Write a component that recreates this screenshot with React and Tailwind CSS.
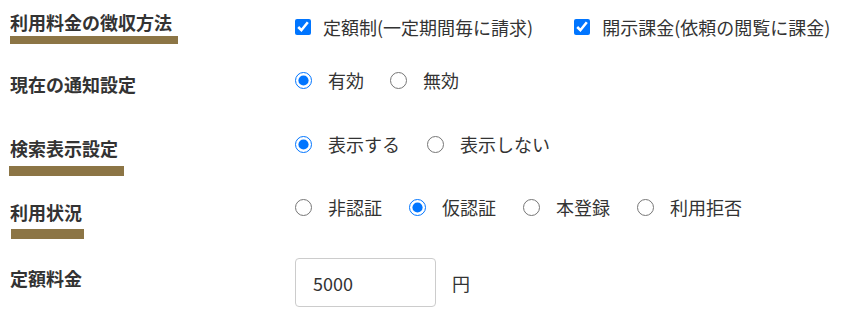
import React, { useState } from 'react'

const font = { fontFamily: '"Noto Sans CJK JP", "Noto Sans", sans-serif' }

const Radio = ({ name, label, checked, onChange }) => (
  <label className="flex items-center cursor-pointer">
    <input type="radio" name={name} checked={checked} onChange={onChange} className="w-[17px] h-[17px] m-0" />
    <span className="ml-[16px]">{label}</span>
  </label>
)

const Check = ({ label, checked, onChange }) => (
  <label className="flex items-center cursor-pointer">
    <input type="checkbox" checked={checked} onChange={onChange} className="w-[16px] h-[16px] m-0" />
    <span className="ml-[12px]">{label}</span>
  </label>
)

const Bar = ({ className }) => <div className={`bg-[#8c7545] ${className}`} />

export default function App() {
  const [fixed, setFixed] = useState(true)
  const [disclose, setDisclose] = useState(true)
  const [notify, setNotify] = useState('on')
  const [search, setSearch] = useState('show')
  const [status, setStatus] = useState('temp')
  const [fee, setFee] = useState('5000')

  return (
    <div className="w-[849px] h-[317px] bg-white text-[#333] text-[18px] leading-[26px]" style={font}>
      {/* 利用料金の徴収方法 */}
      <div className="flex h-[50px]">
        <div className="w-[295px] pt-[9px]">
          <div className="pl-[10px] font-bold">利用料金の徴収方法</div>
          <Bar className="ml-[10px] mt-[1px] w-[168px] h-[8px]" />
        </div>
        <div className="pt-[14px] flex items-start gap-[41px]">
          <Check label="定額制(一定期間毎に請求)" checked={fixed} onChange={() => setFixed(!fixed)} />
          <Check label="開示課金(依頼の閲覧に課金)" checked={disclose} onChange={() => setDisclose(!disclose)} />
        </div>
      </div>

      {/* 現在の通知設定 */}
      <div className="flex h-[65px]">
        <div className="w-[295px] pt-[21px] pl-[10px] font-bold">現在の通知設定</div>
        <div className="pt-[17px] flex items-start gap-[26px]">
          <Radio name="notify" label="有効" checked={notify === 'on'} onChange={() => setNotify('on')} />
          <Radio name="notify" label="無効" checked={notify === 'off'} onChange={() => setNotify('off')} />
        </div>
      </div>

      {/* 検索表示設定 */}
      <div className="flex h-[65px]">
        <div className="w-[295px] pt-[20px]">
          <div className="pl-[10px] font-bold">検索表示設定</div>
          <Bar className="ml-[9px] mt-[5px] w-[115px] h-[10px]" />
        </div>
        <div className="pt-[16px] flex items-start gap-[27px]">
          <Radio name="search" label="表示する" checked={search === 'show'} onChange={() => setSearch('show')} />
          <Radio name="search" label="表示しない" checked={search === 'hide'} onChange={() => setSearch('hide')} />
        </div>
      </div>

      {/* 利用状況 */}
      <div className="flex h-[65px]">
        <div className="w-[295px] pt-[19px]">
          <div className="pl-[10px] font-bold">利用状況</div>
          <Bar className="ml-[11px] mt-[4px] w-[73px] h-[10px]" />
        </div>
        <div className="pt-[14px] flex items-start gap-[27px]">
          <Radio name="status" label="非認証" checked={status === 'none'} onChange={() => setStatus('none')} />
          <Radio name="status" label="仮認証" checked={status === 'temp'} onChange={() => setStatus('temp')} />
          <Radio name="status" label="本登録" checked={status === 'full'} onChange={() => setStatus('full')} />
          <Radio name="status" label="利用拒否" checked={status === 'deny'} onChange={() => setStatus('deny')} />
        </div>
      </div>

      {/* 定額料金 */}
      <div className="flex">
        <div className="w-[295px] pt-[20px] pl-[10px] font-bold">定額料金</div>
        <div className="pt-[13px] flex items-center self-start">
          <input
            type="text"
            value={fee}
            onChange={e => setFee(e.target.value)}
            className="w-[141px] h-[49px] border border-[#ccc] rounded-[4px] pl-[17px] text-[18px] text-[#333] outline-none"
            style={font}
          />
          <span className="ml-[16px]">円</span>
        </div>
      </div>
    </div>
  )
}
